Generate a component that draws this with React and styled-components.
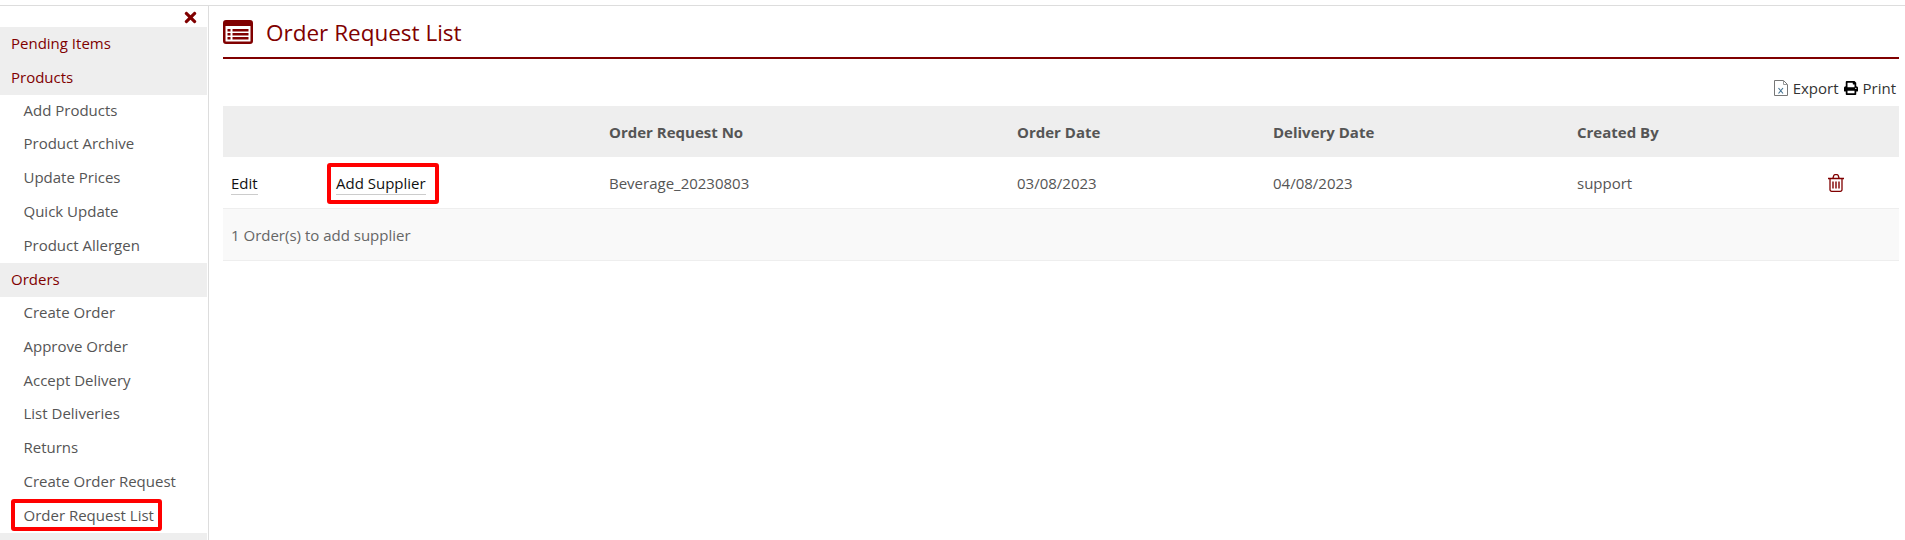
import React from 'react'
import styled, { createGlobalStyle } from 'styled-components'
import { FaTimes, FaPrint } from 'react-icons/fa'

const GlobalStyle = createGlobalStyle`
  html, body {
    margin: 0;
    padding: 0;
    background: #fff;
    font-family: "Open Sans", "Liberation Sans", sans-serif;
    font-size: 15px;
    color: #555;
  }
`

const menu = [
  { title: 'Pending Items', items: [] },
  { title: 'Products', items: ['Add Products', 'Product Archive', 'Update Prices', 'Quick Update', 'Product Allergen'] },
  {
    title: 'Orders',
    items: ['Create Order', 'Approve Order', 'Accept Delivery', 'List Deliveries', 'Returns', 'Create Order Request', 'Order Request List']
  },
  { title: 'Stock', items: [], hideText: true }
]

const ListIcon = () => (
  <svg width="30" height="24" viewBox="0 0 30 24">
    <path
      fill="#800000"
      fillRule="evenodd"
      d="M3 0h24a3 3 0 0 1 3 3v18a3 3 0 0 1-3 3H3a3 3 0 0 1-3-3V3a3 3 0 0 1 3-3zM2.5 6v15a.5.5 0 0 0 .5.5h24a.5.5 0 0 0 .5-.5V6zM4.5 9h3v2.5h-3zM9.5 9h16v2.5h-16zM4.5 13h3v2.5h-3zM9.5 13h16v2.5h-16zM4.5 17h3v2.5h-3zM9.5 17h16v2.5h-16z"
    />
  </svg>
)

const ExcelIcon = () => (
  <svg width="14" height="16" viewBox="0 0 14 16">
    <path fill="#fff" stroke="#777" d="M.5.5h9l4 4v11H.5z" />
    <path fill="none" stroke="#999" d="M9.5.5v4h4" />
    <path fill="none" stroke="#3f6f8f" strokeWidth="1.1" d="M4.5 8l4.5 5.5M9 8l-4.5 5.5" />
  </svg>
)

const TrashIcon = () => (
  <TrashSvg width="16" height="18" viewBox="0 0 16 18">
    <path
      fill="none"
      stroke="#800000"
      strokeWidth="1.3"
      d="M0 4.5h16M2 4.5v11.2a1.6 1.6 0 0 0 1.6 1.6h8.8a1.6 1.6 0 0 0 1.6-1.6V4.5M4.8 4.5l1-3a1.2 1.2 0 0 1 1-.8h2.4a1.2 1.2 0 0 1 1 .8l1 3"
    />
    <path fill="none" stroke="#800000" strokeWidth="1.4" d="M5 7.5v7M8 7.5v7M11 7.5v7" />
  </TrashSvg>
)

export default function App() {
  return (
    <>
      <GlobalStyle />
      <Page>
        <Sidebar>
          <CloseRow>
            <FaTimes />
          </CloseRow>
          {menu.map(group => (
            <React.Fragment key={group.title}>
              <GroupTitle>{group.hideText ? '' : group.title}</GroupTitle>
              {group.items.map(item => (
                <MenuItem key={item}>
                  {item === 'Order Request List' ? <MarkedMenu>{item}</MarkedMenu> : item}
                </MenuItem>
              ))}
            </React.Fragment>
          ))}
        </Sidebar>
        <Main>
          <Heading>
            <ListIcon />
            <h1>Order Request List</h1>
          </Heading>
          <Actions>
            <ExcelIcon />
            <span>Export</span>
            <FaPrint />
            <span>Print</span>
          </Actions>
          <Table>
            <colgroup>
              <col style={{ width: 105 }} />
              <col style={{ width: 273 }} />
              <col style={{ width: 408 }} />
              <col style={{ width: 256 }} />
              <col style={{ width: 304 }} />
              <col style={{ width: 235 }} />
              <col />
            </colgroup>
            <thead>
              <tr>
                <th />
                <th />
                <th>Order Request No</th>
                <th>Order Date</th>
                <th>Delivery Date</th>
                <th>Created By</th>
                <th />
              </tr>
            </thead>
            <tbody>
              <tr>
                <td><RowLink>Edit</RowLink></td>
                <td>
                  <Marked><RowLink>Add Supplier</RowLink></Marked>
                </td>
                <td>Beverage_20230803</td>
                <td>03/08/2023</td>
                <td>04/08/2023</td>
                <td>support</td>
                <td><TrashIcon /></td>
              </tr>
            </tbody>
            <tfoot>
              <tr>
                <td colSpan="7">1 Order(s) to add supplier</td>
              </tr>
            </tfoot>
          </Table>
        </Main>
      </Page>
    </>
  )
}

const Page = styled.div`
  display: flex;
  height: 535px;
  margin-top: 5px;
  border-top: 1px solid #ddd;
  box-sizing: border-box;
  overflow: hidden;
`

const Sidebar = styled.aside`
  flex: 0 0 207px;
  border-right: 1px solid #ddd;
  padding-right: 1px;
`

const CloseRow = styled.div`
  display: flex;
  justify-content: flex-end;
  align-items: center;
  height: 21px;
  padding: 2px 8px 0 0;
  box-sizing: border-box;
  color: #800000;
  font-size: 17px;
`

const GroupTitle = styled.div`
  height: 33.75px;
  line-height: 32.5px;
  padding-left: 11px;
  background: #eee;
  color: #800000;
`

const MenuItem = styled.div`
  height: 33.75px;
  line-height: 31px;
  padding-left: 23.5px;
  color: #555;
`

const MarkedMenu = styled.span`
  position: relative;

  &::after {
    content: '';
    position: absolute;
    left: -12.5px;
    right: -8px;
    top: -6px;
    bottom: -6px;
    border: 4px solid #f00;
    border-radius: 3px;
  }
`

const Main = styled.main`
  flex: 1;
  padding: 0 6px 0 14px;
  min-width: 0;
`

const Heading = styled.div`
  display: flex;
  align-items: center;
  gap: 13px;
  height: 51px;
  border-bottom: 2px solid #800000;
  box-sizing: content-box;
  color: #800000;

  h1 {
    margin: 2px 0 0;
    font-size: 22.5px;
    font-weight: 400;
  }
`

const Actions = styled.div`
  display: flex;
  justify-content: flex-end;
  align-items: center;
  gap: 5px;
  height: 17px;
  margin-top: 20px;
  margin-bottom: 10px;
  padding-right: 3px;
  color: #333;

  svg:nth-of-type(2) {
    color: #000;
    font-size: 14px;
  }
`

const Table = styled.table`
  width: 100%;
  border-collapse: collapse;
  table-layout: fixed;

  th {
    height: 51px;
    padding: 0 8px;
    background: #eee;
    text-align: left;
    font-weight: 700;
    color: #555;
  }

  tbody td {
    height: 51px;
    padding: 0 8px;
    border-bottom: 1px solid #eee;
    color: #555;
  }

  tfoot td {
    height: 51px;
    padding: 0 8px;
    background: #f9f9f9;
    border-bottom: 1px solid #eee;
    color: #666;
  }
`

const RowLink = styled.a`
  color: #111;
  border-bottom: 1px solid #ccc;
  padding-bottom: 1px;
`

const Marked = styled.span`
  position: relative;
  display: inline-block;

  &::after {
    content: '';
    position: absolute;
    left: -9px;
    right: -13px;
    top: -10px;
    bottom: -11px;
    border: 4px solid #f00;
    border-radius: 3px;
  }
`

const TrashSvg = styled.svg`
  display: block;
  margin-left: 16px;
`
